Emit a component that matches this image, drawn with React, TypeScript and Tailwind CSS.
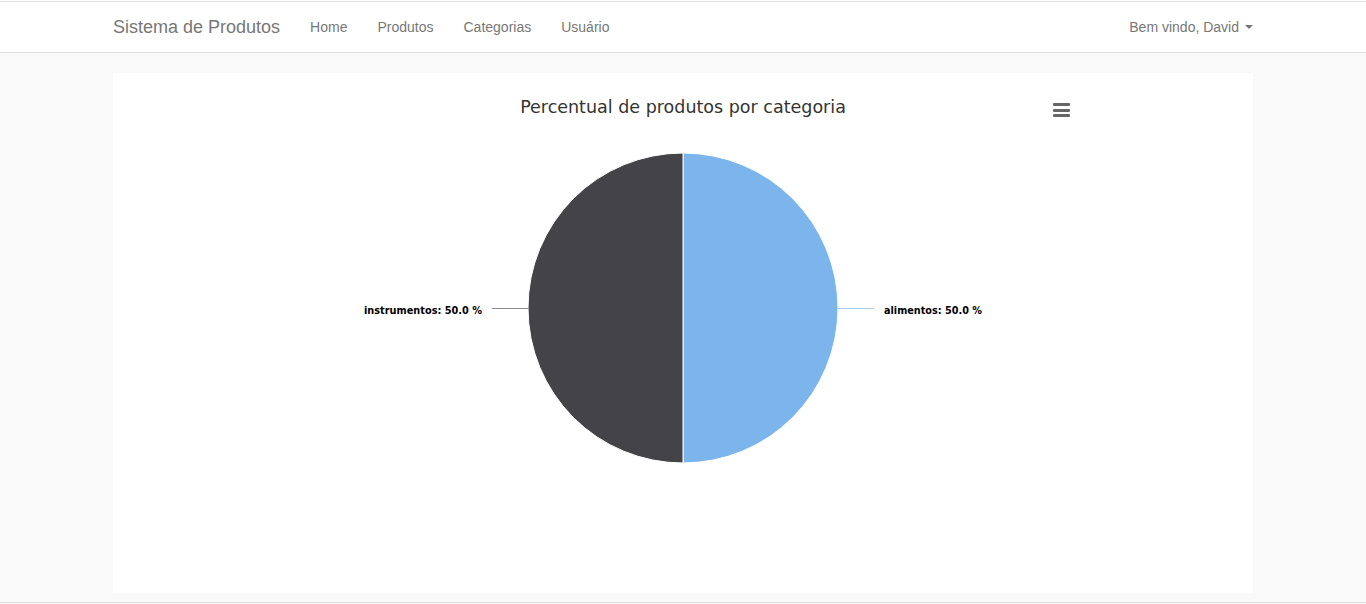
const navLinks = ['Home', 'Produtos', 'Categorias', 'Usuário'];

// pie geometry, in card-local coordinates (card is 1140x520)
const cx = 570;
const cy = 235;
const r = 155;

function PieChart() {
  return (
    <svg width={1140} height={520} className="block" style={{ fontFamily: '"DejaVu Sans", sans-serif' }}>
      <text x={cx} y={40} textAnchor="middle" fontSize={17.5} fill="#333333">
        Percentual de produtos por categoria
      </text>

      {/* export menu button */}
      <g fill="#666666">
        <rect x={940} y={30} width={17} height={3} rx={1} />
        <rect x={940} y={36} width={17} height={3} rx={1} />
        <rect x={940} y={41} width={17} height={3} rx={1} />
      </g>

      {/* slices */}
      <path
        d={`M ${cx} ${cy} L ${cx} ${cy - r} A ${r} ${r} 0 0 1 ${cx} ${cy + r} Z`}
        fill="#7cb5ec"
        stroke="#ffffff"
        strokeWidth={1}
      />
      <path
        d={`M ${cx} ${cy} L ${cx} ${cy + r} A ${r} ${r} 0 0 1 ${cx} ${cy - r} Z`}
        fill="#434348"
        stroke="#ffffff"
        strokeWidth={1}
      />

      {/* connectors */}
      <path d={`M ${cx - r} ${cy + 0.5} L ${cx - r - 36} ${cy + 0.5}`} stroke="#8a8a8e" strokeWidth={1} />
      <path d={`M ${cx + r} ${cy + 0.5} L ${cx + r + 36} ${cy + 0.5}`} stroke="#a8cdf1" strokeWidth={1} />

      {/* labels */}
      <text x={251} y={241} textLength={118} lengthAdjust="spacingAndGlyphs" fontSize={11} fontWeight={700} fill="#000000">
        instrumentos: 50.0 %
      </text>
      <text x={771} y={241} textLength={98} lengthAdjust="spacingAndGlyphs" fontSize={11} fontWeight={700} fill="#000000">
        alimentos: 50.0 %
      </text>
    </svg>
  );
}

export default function App() {
  return (
    <div className="min-h-screen bg-[#f9f9f9] font-['Liberation_Sans',Arial,sans-serif]">
      <div className="h-px bg-white" />
      <nav className="h-[52px] bg-white border-y border-[#e0e0e0]">
        <div className="w-[1140px] mx-auto h-full flex items-center justify-between">
          <div className="flex items-center">
            <span className="text-[18px] text-[#777777] pr-[15px]">Sistema de Produtos</span>
            <ul className="flex items-center">
              {navLinks.map((link) => (
                <li key={link} className="px-[15px] text-[14px] text-[#777777]">
                  {link}
                </li>
              ))}
            </ul>
          </div>
          <div className="flex items-center text-[14px] text-[#777777]">
            Bem vindo, David
            <span className="ml-[6px] w-0 h-0 border-x-[4px] border-x-transparent border-t-[4px] border-t-[#777777]" />
          </div>
        </div>
      </nav>

      <main className="pt-5 pb-[9px]">
        <div className="w-[1140px] h-[520px] mx-auto bg-white">
          <PieChart />
        </div>
      </main>
      <div className="border-t border-[#dddddd] h-px bg-white" />
    </div>
  );
}
